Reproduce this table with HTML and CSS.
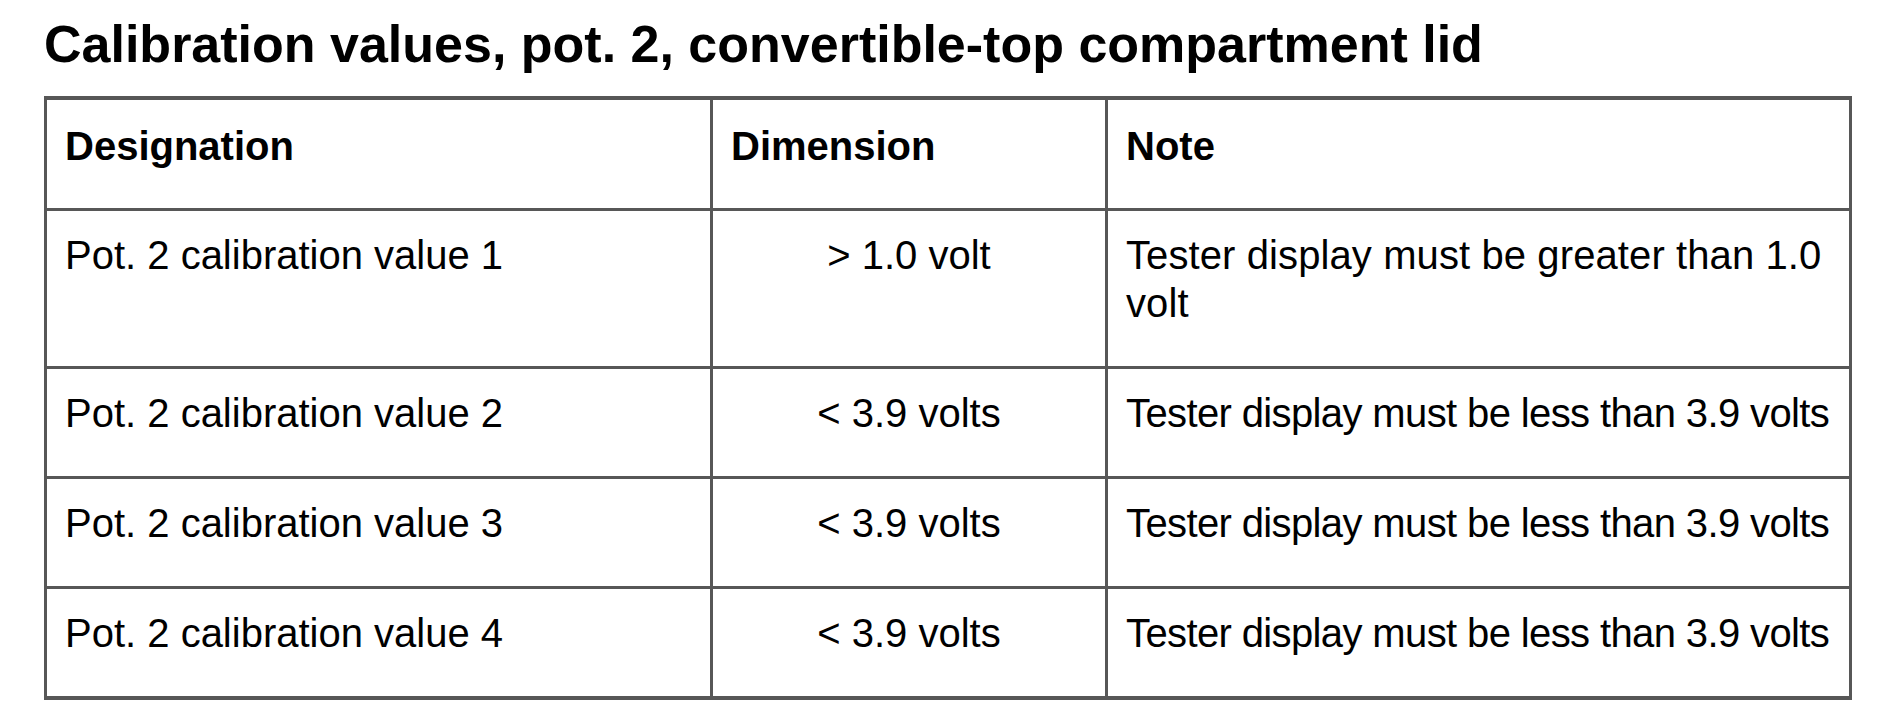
FILE: index.html
```html
<!DOCTYPE html>
<html lang="en">
<head>
<meta charset="utf-8">
<title>Calibration values, pot. 2, convertible-top compartment lid</title>
<link rel="stylesheet" href="styles.css">
</head>
<body>
<main class="page">
  <h1 class="title">Calibration values, pot. 2, convertible-top compartment lid</h1>
  <table class="cal-table">
    <thead>
      <tr>
        <th class="col-designation">Designation</th>
        <th class="col-dimension">Dimension</th>
        <th class="col-note">Note</th>
      </tr>
    </thead>
    <tbody>
      <tr>
        <td>Pot. 2 calibration value 1</td>
        <td class="center">&gt; 1.0 volt</td>
        <td class="wide">Tester display must be greater than 1.0 volt</td>
      </tr>
      <tr>
        <td>Pot. 2 calibration value 2</td>
        <td class="center">&lt; 3.9 volts</td>
        <td class="tight">Tester display must be less than 3.9 volts</td>
      </tr>
      <tr>
        <td>Pot. 2 calibration value 3</td>
        <td class="center">&lt; 3.9 volts</td>
        <td class="tight">Tester display must be less than 3.9 volts</td>
      </tr>
      <tr class="last">
        <td>Pot. 2 calibration value 4</td>
        <td class="center">&lt; 3.9 volts</td>
        <td class="tight">Tester display must be less than 3.9 volts</td>
      </tr>
    </tbody>
  </table>
</main>
</body>
</html>
```

FILE: styles.css
```css
html, body {
  margin: 0;
  padding: 0;
  background: #ffffff;
}

body {
  font-family: "Liberation Sans", Arial, sans-serif;
  color: #000000;
}

.page {
  padding: 14px 30px 0 44px;
}

.title {
  margin: 0 0 22px 0;
  font-size: 52px;
  line-height: 60px;
  font-weight: bold;
  white-space: nowrap;
}

.cal-table {
  border-collapse: separate;
  border-spacing: 0;
  table-layout: fixed;
  width: 1808px;
  border-top: 4px solid #575757;
  border-left: 3px solid #575757;
}

.cal-table th,
.cal-table td {
  box-sizing: border-box;
  border-right: 3px solid #575757;
  border-bottom: 3px solid #575757;
  text-align: left;
  vertical-align: top;
  font-size: 40px;
  line-height: 48px;
  padding: 20px 18px 39px 18px;
}

.cal-table th {
  font-weight: bold;
  padding-top: 22px;
  padding-bottom: 38px;
}

.col-designation { width: 666px; }
.col-dimension { width: 395px; }
.col-note { width: 744px; }

.cal-table td.center {
  text-align: center;
}

.cal-table td.wide {
  letter-spacing: 0.1px;
}

.cal-table td.tight {
  letter-spacing: -0.62px;
  white-space: nowrap;
}

.cal-table tr.last td {
  border-bottom-width: 4px;
}
```
